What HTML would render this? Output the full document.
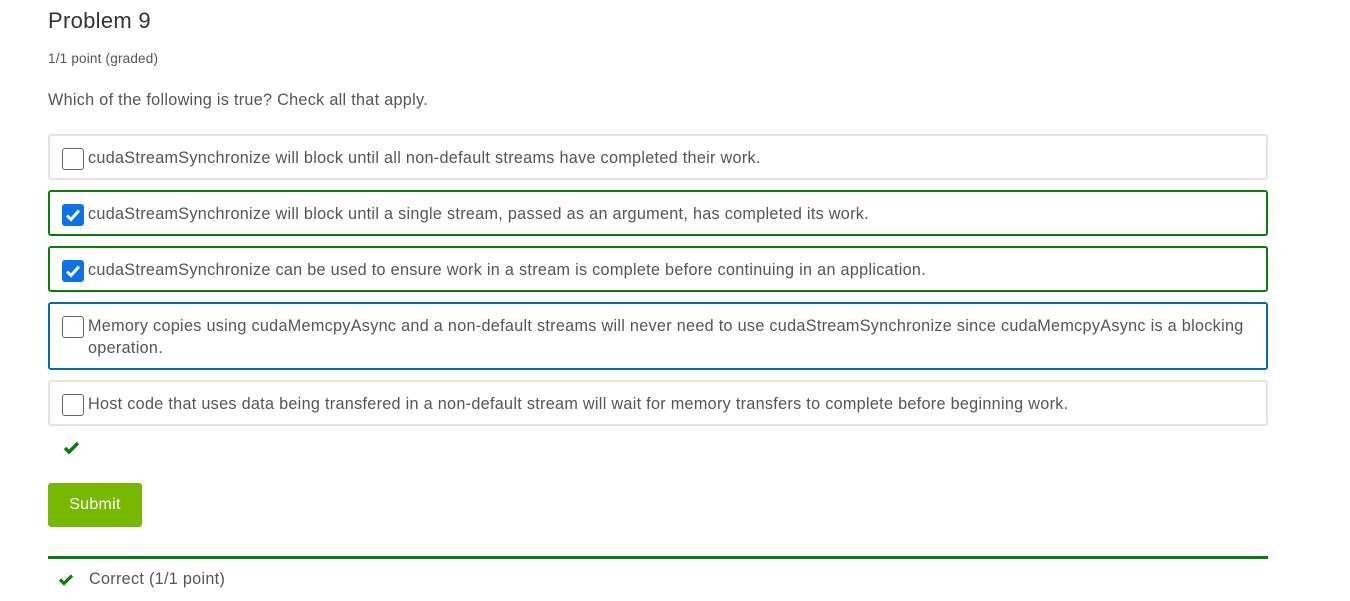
<!DOCTYPE html>
<html><head><meta charset="utf-8"><style>
body{margin:0;background:#fff;font-family:"Liberation Sans",sans-serif;color:#5a5a5a;width:1350px;height:601px;overflow:hidden;position:relative}
.a{position:absolute}
h1{position:absolute;left:48px;top:8px;margin:0;font-weight:normal;font-size:22px;color:#333;letter-spacing:0.3px}
.box{position:absolute;left:48px;border:2px solid #e4e4e4;border-radius:3px;box-sizing:border-box;width:1220px;font-size:16.2px;letter-spacing:0.3px;color:#555}
.box .t{position:absolute;left:38px;top:11px;right:10px;line-height:22px}
.cb{position:absolute;left:12px;top:12px;width:20px;height:20px;border:1px solid #666;border-radius:3px;background:#fff}
.cb.on{background:#0a73ea;border-color:#0a73ea}
.g{border-color:#0a7d0a}
.b{border-color:#0a69a8}
</style></head><body>
<h1>Problem 9</h1>
<div class="a" style="left:48px;top:51px;font-size:13.5px;color:#555;letter-spacing:0.2px">1/1 point (graded)</div>
<div class="a" style="left:48px;top:91px;font-size:16.2px;color:#555;letter-spacing:0.3px">Which of the following is true? Check all that apply.</div>

<div class="box" style="top:134px;height:46px"><div class="cb"></div><div class="t">cudaStreamSynchronize will block until all non-default streams have completed their work.</div></div>
<div class="box g" style="top:190px;height:46px"><div class="cb on"><svg width="20" height="20" viewBox="0 0 20 20"><path d="M4 10.5l4 4 8-9" stroke="#fff" stroke-width="3" fill="none"/></svg></div><div class="t">cudaStreamSynchronize will block until a single stream, passed as an argument, has completed its work.</div></div>
<div class="box g" style="top:246px;height:46px"><div class="cb on"><svg width="20" height="20" viewBox="0 0 20 20"><path d="M4 10.5l4 4 8-9" stroke="#fff" stroke-width="3" fill="none"/></svg></div><div class="t">cudaStreamSynchronize can be used to ensure work in a stream is complete before continuing in an application.</div></div>
<div class="box b" style="top:302px;height:68px"><div class="cb"></div><div class="t">Memory copies using cudaMemcpyAsync and a non-default streams will never need to use cudaStreamSynchronize since cudaMemcpyAsync is a blocking operation.</div></div>
<div class="box" style="top:380px;height:46px"><div class="cb"></div><div class="t">Host code that uses data being transfered in a non-default stream will wait for memory transfers to complete before beginning work.</div></div>

<svg class="a" style="left:63px;top:441px" width="17" height="14" viewBox="0 0 17 14"><path d="M2 7l4 4 9-9" stroke="#0a7d0a" stroke-width="3.5" fill="none"/></svg>
<div class="a" style="left:48px;top:483px;width:94px;height:44px;background:#76b900;border-radius:3px;color:#fff;font-size:16px;text-align:center;line-height:44px;letter-spacing:0.3px">Submit</div>
<div class="a" style="left:48px;top:556px;width:1220px;height:3px;background:#0a7d0a"></div>
<svg class="a" style="left:58px;top:573px" width="16" height="13" viewBox="0 0 16 13"><path d="M2 6.5l4 4 8-8" stroke="#0a7d0a" stroke-width="3.2" fill="none"/></svg>
<div class="a" style="left:89px;top:570px;font-size:16.2px;color:#555;letter-spacing:0.3px">Correct (1/1 point)</div>
</body></html>
